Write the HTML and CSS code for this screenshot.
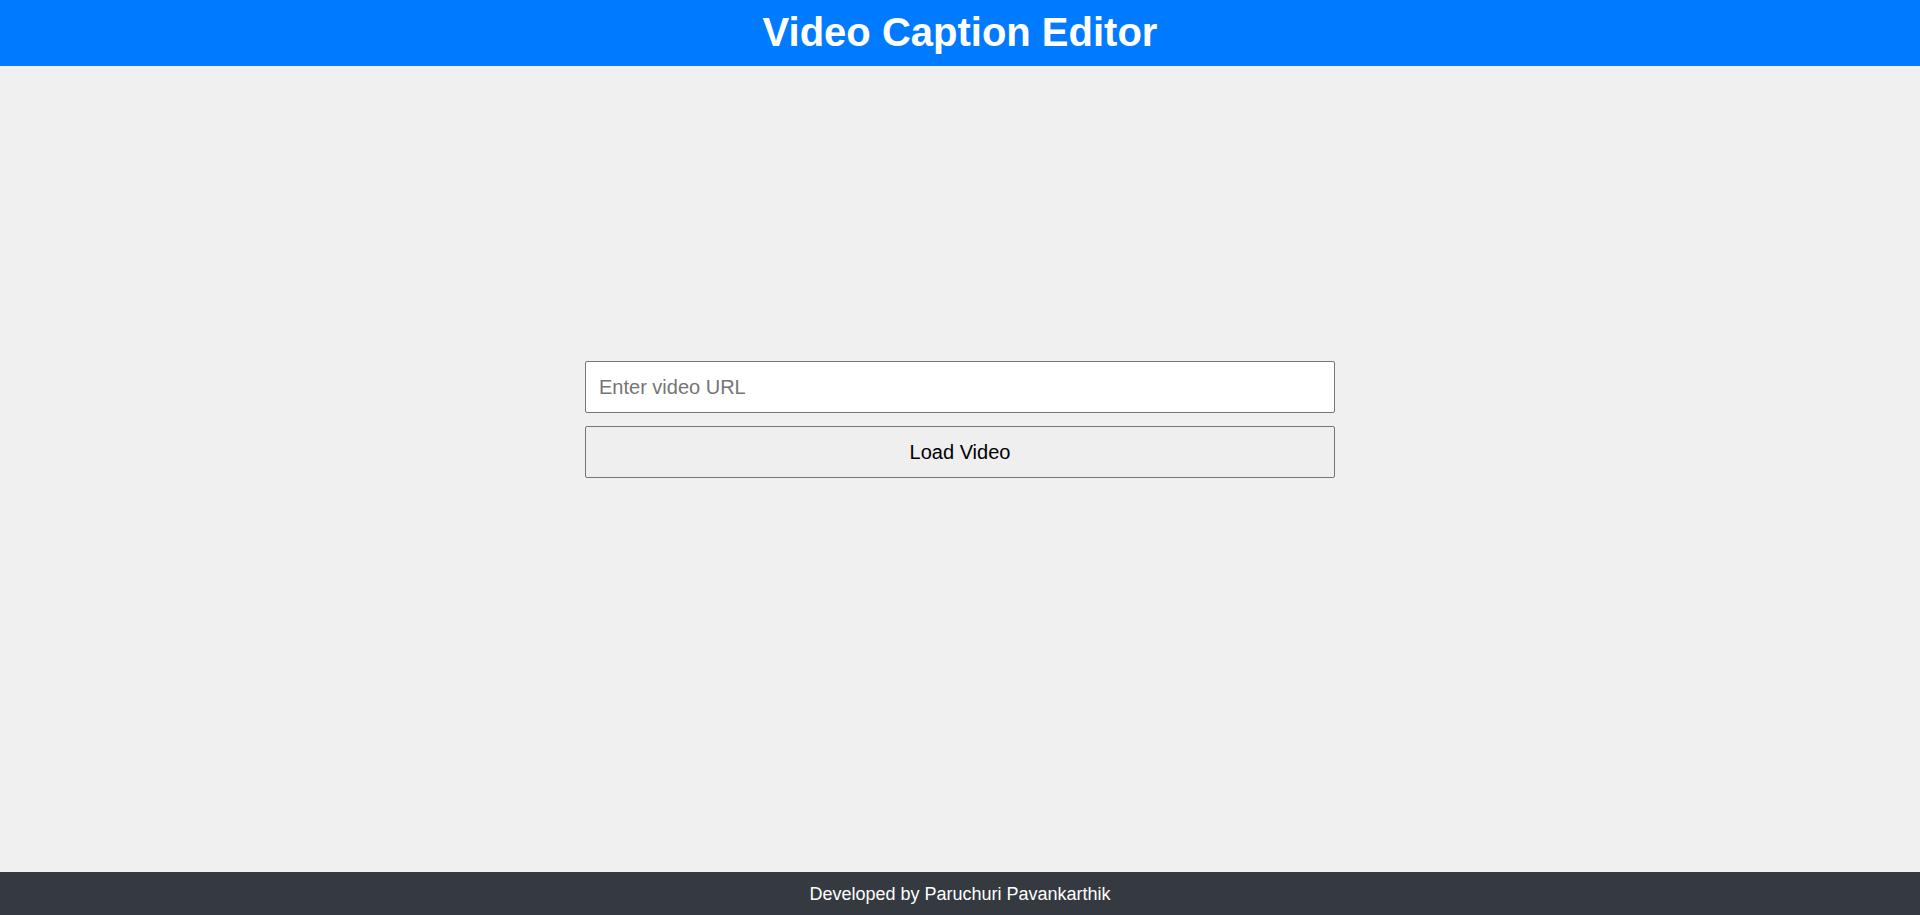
FILE: index.html
```html
<!DOCTYPE html>
<html lang="en">
<head>
<meta charset="UTF-8">
<title>Video Caption Editor</title>
<link rel="stylesheet" href="styles.css">
</head>
<body>
<header class="app-header">
  <h1 class="app-title">Video Caption Editor</h1>
</header>
<main class="app-main">
  <div class="loader">
    <input class="url-input" type="text" placeholder="Enter video URL">
    <button class="load-btn" type="button">Load Video</button>
  </div>
</main>
<footer class="app-footer">Developed by Paruchuri Pavankarthik</footer>
</body>
</html>
```

FILE: styles.css
```css
html, body {
  margin: 0;
  padding: 0;
  height: 100%;
}
body {
  font-family: "Liberation Sans", Arial, sans-serif;
  background: #f0f0f0;
  display: flex;
  flex-direction: column;
  min-height: 100vh;
}
.app-header {
  background: #007bff;
  color: #ffffff;
  height: 66px;
  display: flex;
  align-items: center;
  justify-content: center;
  flex: none;
}
.app-title {
  margin: 0;
  font-size: 40px;
  font-weight: bold;
  line-height: 46px;
  padding-bottom: 2px;
}
.app-main {
  flex: 1;
  display: flex;
  flex-direction: column;
  align-items: center;
  justify-content: center;
  padding-bottom: 99px;
}
.loader {
  width: 750px;
  display: flex;
  flex-direction: column;
  gap: 13px;
}
.url-input {
  box-sizing: border-box;
  width: 100%;
  height: 52px;
  padding: 0 13px;
  font-family: "Liberation Sans", Arial, sans-serif;
  font-size: 20px;
  border: 1px solid #767676;
  border-radius: 2px;
  background: #ffffff;
  color: #000;
  margin: 0;
}
.url-input::placeholder {
  color: #757575;
}
.load-btn {
  box-sizing: border-box;
  width: 100%;
  height: 52px;
  font-family: "Liberation Sans", Arial, sans-serif;
  font-size: 20px;
  color: #000;
  background: #efefef;
  border: 1px solid #767676;
  border-radius: 2px;
  margin: 0;
  padding: 0;
}
.app-footer {
  flex: none;
  background: #343a40;
  color: #ffffff;
  text-align: center;
  font-size: 18px;
  line-height: 21px;
  height: 43px;
  box-sizing: border-box;
  padding-top: 12px;
}
```
